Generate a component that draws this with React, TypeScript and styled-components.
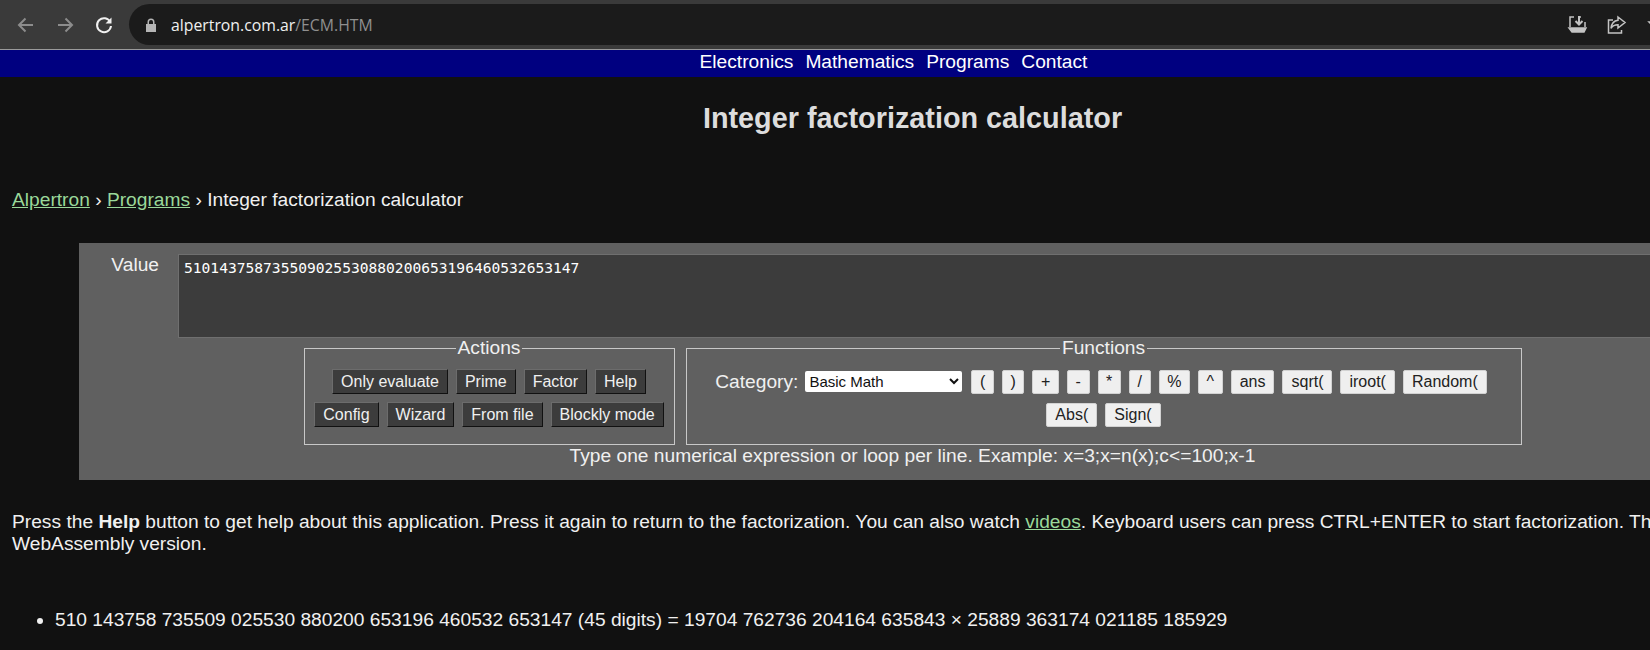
import styled, { createGlobalStyle } from 'styled-components';

const GlobalStyle = createGlobalStyle`
  html, body {
    margin: 0;
    padding: 0;
    height: 650px;
    overflow: hidden;
    background: #111111;
  }
  #root {
    width: 1650px;
    height: 650px;
    overflow: hidden;
  }
`;

const Toolbar = styled.header`
  height: 50px;
  box-sizing: border-box;
  padding: 4px 0;
  display: flex;
  align-items: stretch;
  background: #3a3a3a;
  border-bottom: 1px solid #9a9a9a;
`;

const NavIcons = styled.div`
  width: 129px;
  flex: none;
  display: flex;
  align-items: center;
  padding-left: 16px;
  gap: 19px;
  box-sizing: border-box;
`;

const NavIcon = styled.svg<{ $on?: boolean }>`
  width: 20px;
  height: 20px;
  fill: none;
  stroke: ${(p) => (p.$on ? '#f1f1f1' : '#8c8c8c')};
  stroke-width: 2;
`;

const AddressBar = styled.div`
  flex: 1;
  display: flex;
  align-items: center;
  background: #1b1b1b;
  border-radius: 21px 0 0 21px;
  padding-left: 16px;
  min-width: 0;
`;

const LockIcon = styled.svg`
  width: 12px;
  height: 14px;
  fill: #b5b5b5;
  flex: none;
`;

const Url = styled.div`
  margin-left: 14px;
  font: 15.8px 'Open Sans', 'Liberation Sans', sans-serif;
  color: #8f8f8f;
  flex: 1;
`;

const Host = styled.span`
  color: #f0f0f0;
`;

const BarIcons = styled.div`
  display: flex;
  align-items: center;
  gap: 18px;
  margin-right: -16px;
`;

const BarIcon = styled.svg`
  width: 21px;
  height: 21px;
  fill: none;
  stroke: #c4c4c4;
  stroke-width: 1.5;
`;

const Page = styled.div`
  width: 1825px;
  font-family: 'Liberation Sans', Arial, sans-serif;
  font-size: 19.2px;
  color: #f0f0f0;
`;

const TopNav = styled.nav`
  height: 27px;
  box-sizing: border-box;
  padding: 0 38px 4px 0;
  background: #000080;
  display: flex;
  justify-content: center;
  gap: 12px;
  align-items: center;
`;

const TopLink = styled.a`
  color: #ffffff;
`;

const Title = styled.h1`
  margin: 25px 0 0;
  font-size: 28.8px;
  line-height: 32px;
  font-weight: bold;
  color: #dddddd;
  text-align: center;
`;

const Crumbs = styled.div`
  margin: 55px 0 0 12px;
  line-height: 21px;
`;

const TextLink = styled.a`
  color: #9ad89a;
  text-decoration: underline;
`;

const Panel = styled.section`
  margin: 33px 79px 0;
  height: 237px;
  box-sizing: border-box;
  background: #606060;
  padding-top: 11px;
`;

const ValueRow = styled.div`
  display: flex;
  height: 84px;
`;

const ValueLabel = styled.label`
  width: 80px;
  margin-right: 19px;
  text-align: right;
  line-height: 21px;
`;

const ValueInput = styled.textarea`
  flex: 1;
  box-sizing: border-box;
  margin: 0;
  height: 84px;
  padding: 5px;
  resize: none;
  background: #3c3c3c;
  border: 1px solid #6f6f6f;
  color: #ffffff;
  font: 14.6px/16px 'DejaVu Sans Mono', monospace;
`;

const Boxes = styled.div`
  display: flex;
  justify-content: center;
  gap: 11px;
`;

const Box = styled.fieldset<{ $width: number }>`
  width: ${(p) => p.$width}px;
  box-sizing: border-box;
  height: 107px;
  margin: 0;
  padding: 0;
  border: 1px solid #c8c8c8;
  display: flex;
  flex-direction: column;
  gap: 8px;
`;

const BoxTitle = styled.legend`
  margin: 0 auto;
  padding: 0 2px;
  line-height: 20px;
`;

const ButtonRow = styled.div<{ $trail?: number }>`
  display: flex;
  justify-content: center;
  align-items: center;
  gap: 8px;
  height: 25px;
  padding-right: ${(p) => p.$trail ?? 0}px;
  &:first-of-type {
    margin-top: 11px;
  }
`;

const ActionButton = styled.button`
  height: 25px;
  padding: 0 8px;
  box-sizing: border-box;
  background: #3c3c3c;
  color: #f0f0f0;
  font: 16px 'Liberation Sans', Arial, sans-serif;
  border: 1px solid;
  border-color: #6c6c6c #111111 #111111 #6c6c6c;
`;

const FuncButton = styled.button<{ $narrow?: boolean }>`
  height: 24px;
  padding: 0 ${(p) => (p.$narrow ? 7.6 : 8)}px;
  box-sizing: border-box;
  min-width: 21px;
  background: #efefef;
  color: #222222;
  font: 16px 'Liberation Sans', Arial, sans-serif;
  border: 1px solid #d2d2d2;
  border-radius: 2px;
`;

const CategoryLabel = styled.label`
  margin-right: -1px;
`;

const CategorySelect = styled.select`
  width: 157px;
  height: 21px;
  font: 15px 'Liberation Sans', Arial, sans-serif;
  background: #ffffff;
  color: #111111;
  border: none;
  border-radius: 2px;
  margin-right: 1px;
`;

const Hint = styled.div`
  text-align: center;
  line-height: 21px;
`;

const Intro = styled.p`
  margin: 31px 0 0 12px;
  line-height: 22px;
  white-space: nowrap;
`;

const Results = styled.ul`
  margin: 54px 0 0;
  padding-left: 55px;
  line-height: 22px;
`;

const actionRows = [
  ['Only evaluate', 'Prime', 'Factor', 'Help'],
  ['Config', 'Wizard', 'From file', 'Blockly mode'],
];

const symbols = ['(', ')', '+', '-', '*', '/', '%', '^'];
const funcs = ['ans', 'sqrt(', 'iroot(', 'Random('];

export default function App() {
  return (
    <>
      <GlobalStyle />
      <Toolbar>
        <NavIcons>
          <NavIcon viewBox="0 0 20 20">
            <path d="M17 10H3.5M9.5 3.5 3 10l6.5 6.5" />
          </NavIcon>
          <NavIcon viewBox="0 0 20 20">
            <path d="M3 10h13.5M10.5 3.5 17 10l-6.5 6.5" />
          </NavIcon>
          <NavIcon $on viewBox="0 0 20 20">
            <path d="M16.3 7A7 7 0 1 0 17 11" />
            <path d="M17.5 2.5v6h-6z" fill="#f1f1f1" stroke="none" />
          </NavIcon>
        </NavIcons>
        <AddressBar>
          <LockIcon viewBox="0 0 12 14">
            <path d="M2.5 6V4a3.5 3.5 0 0 1 7 0v2H11v8H1V6zM4 6h4V4a2 2 0 0 0-4 0z" />
          </LockIcon>
          <Url>
            <Host>alpertron.com.ar</Host>/ECM.HTM
          </Url>
          <BarIcons>
            <BarIcon viewBox="0 0 21 21">
              <path d="M7 3H3v10M13 3h1M18 8v5" />
              <path d="M12 2v8M8.5 7l3.5 3.5L15.5 7" strokeWidth="2" />
              <path d="M2 14h17l-2 4H5z" fill="#c4c4c4" />
            </BarIcon>
            <BarIcon viewBox="0 0 21 21">
              <path d="M7 6H2.5v13h13v-3" />
              <path d="M12 3l7 5.5-7 5.5v-3.2c-3.5 0-5.5 1-7 3.5 .5-4.5 3-7.5 7-8z" />
            </BarIcon>
            <BarIcon viewBox="0 0 21 21">
              <path d="M4 8l5 5 5-5z" fill="#c4c4c4" />
            </BarIcon>
          </BarIcons>
        </AddressBar>
      </Toolbar>
      <Page>
        <TopNav>
          <TopLink>Electronics</TopLink>
          <TopLink>Mathematics</TopLink>
          <TopLink>Programs</TopLink>
          <TopLink>Contact</TopLink>
        </TopNav>
        <Title>Integer factorization calculator</Title>
        <Crumbs>
          <TextLink>Alpertron</TextLink> › <TextLink>Programs</TextLink> › Integer factorization calculator
        </Crumbs>
        <Panel>
          <ValueRow>
            <ValueLabel>Value</ValueLabel>
            <ValueInput readOnly value="510143758735509025530880200653196460532653147" />
          </ValueRow>
          <Boxes>
            <Box $width={371}>
              <BoxTitle>Actions</BoxTitle>
              {actionRows.map((row) => (
                <ButtonRow key={row[0]}>
                  {row.map((label) => (
                    <ActionButton key={label}>{label}</ActionButton>
                  ))}
                </ButtonRow>
              ))}
            </Box>
            <Box $width={836}>
              <BoxTitle>Functions</BoxTitle>
              <ButtonRow $trail={5}>
                <CategoryLabel>Category:</CategoryLabel>
                <CategorySelect defaultValue="Basic Math">
                  <option>Basic Math</option>
                </CategorySelect>
                {symbols.map((label) => (
                  <FuncButton $narrow key={label}>{label}</FuncButton>
                ))}
                {funcs.map((label) => (
                  <FuncButton key={label}>{label}</FuncButton>
                ))}
              </ButtonRow>
              <ButtonRow>
                <FuncButton>Abs(</FuncButton>
                <FuncButton>Sign(</FuncButton>
              </ButtonRow>
            </Box>
          </Boxes>
          <Hint>Type one numerical expression or loop per line. Example: x=3;x=n(x);c&lt;=100;x-1</Hint>
        </Panel>
        <Intro>
          Press the <b>Help</b> button to get help about this application. Press it again to return to the factorization. You can also watch <TextLink>videos</TextLink>. Keyboard users can press CTRL+ENTER to start factorization. The source code is available in the
          <br />
          WebAssembly version.
        </Intro>
        <Results>
          <li>510 143758 735509 025530 880200 653196 460532 653147 (45 digits) = 19704 762736 204164 635843 × 25889 363174 021185 185929</li>
        </Results>
      </Page>
    </>
  );
}
